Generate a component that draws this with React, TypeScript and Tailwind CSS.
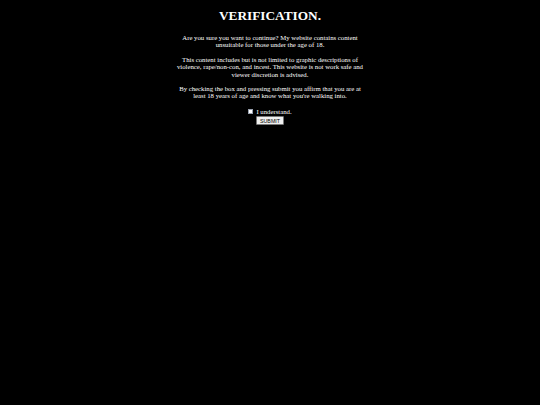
export default function App() {
  return (
    <div className="min-h-[405px] w-full bg-black text-white font-['Liberation_Serif','Times_New_Roman',serif] flex flex-col items-center">
      <h1 className="mt-[9px] text-[13.3px] leading-[14.5px] font-bold">VERIFICATION.</h1>
      <p className="mt-[10px] text-center text-[6.75px] leading-[7.5px]">
        Are you sure you want to continue? My website contains content
        <br />
        unsuitable for those under the age of 18.
      </p>
      <p className="mt-[7px] text-center text-[6.75px] leading-[7.5px]">
        This content includes but is not limited to graphic descriptions of
        <br />
        violence, rape/non-con, and incest. This website is not work safe and
        <br />
        viewer discretion is advised.
      </p>
      <p className="mt-[6.5px] text-center text-[6.75px] leading-[7.5px]">
        By checking the box and pressing submit you affirm that you are at
        <br />
        least 18 years of age and know what you're walking into.
      </p>
      <label className="mt-[8px] flex items-center gap-[3px] text-[6.75px] leading-[7.5px]">
        <span className="w-[5px] h-[5px] bg-white border border-gray-400" />
        I understand.
      </label>
      <button className="mt-[1px] h-[9px] px-[3px] bg-[#efefef] border border-[#767676] text-black text-[5.3px] leading-[6px] font-['Liberation_Sans',Arial,sans-serif] rounded-[1px]">
        SUBMIT
      </button>
    </div>
  );
}
